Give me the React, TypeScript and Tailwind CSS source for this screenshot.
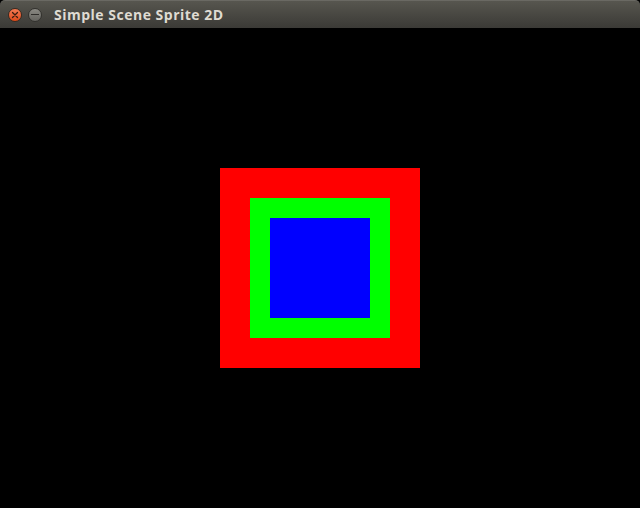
import React from "react";

export default function App() {
  return (
    <div className="w-[640px] h-[508px] flex flex-col bg-black overflow-hidden">
      <div className="h-[28px] flex items-center rounded-t-[5px] bg-gradient-to-b from-[#57564f] to-[#3b3a36] border-t border-[#6a6963]">
        <div className="ml-[8px] w-[14px] h-[14px] rounded-full bg-gradient-to-b from-[#f47a52] to-[#df4a16] border border-[#3a2a20] flex items-center justify-center">
          <svg width="8" height="8" viewBox="0 0 8 8">
            <path d="M1.5 1.5 L6.5 6.5 M6.5 1.5 L1.5 6.5" stroke="#3a1d10" strokeWidth="1.3" strokeLinecap="round" />
          </svg>
        </div>
        <div className="ml-[6px] w-[14px] h-[14px] rounded-full bg-gradient-to-b from-[#8a8983] to-[#65645f] border border-[#33322e] flex items-center justify-center">
          <div className="w-[8px] h-[1.5px] bg-[#2e2d2a]" />
        </div>
        <span
          className="ml-[12px] text-[14px] tracking-[0.5px] font-bold text-[#dfdbd2] leading-none"
          style={{ fontFamily: '"Open Sans", "DejaVu Sans", sans-serif' }}
        >
          Simple Scene Sprite 2D
        </span>
      </div>
      <div className="flex-1 flex items-center justify-center">
        <div className="w-[200px] h-[200px] bg-[#ff0000] flex items-center justify-center">
          <div className="w-[140px] h-[140px] bg-[#00ff00] flex items-center justify-center">
            <div className="w-[100px] h-[100px] bg-[#0000ff]" />
          </div>
        </div>
      </div>
    </div>
  );
}
